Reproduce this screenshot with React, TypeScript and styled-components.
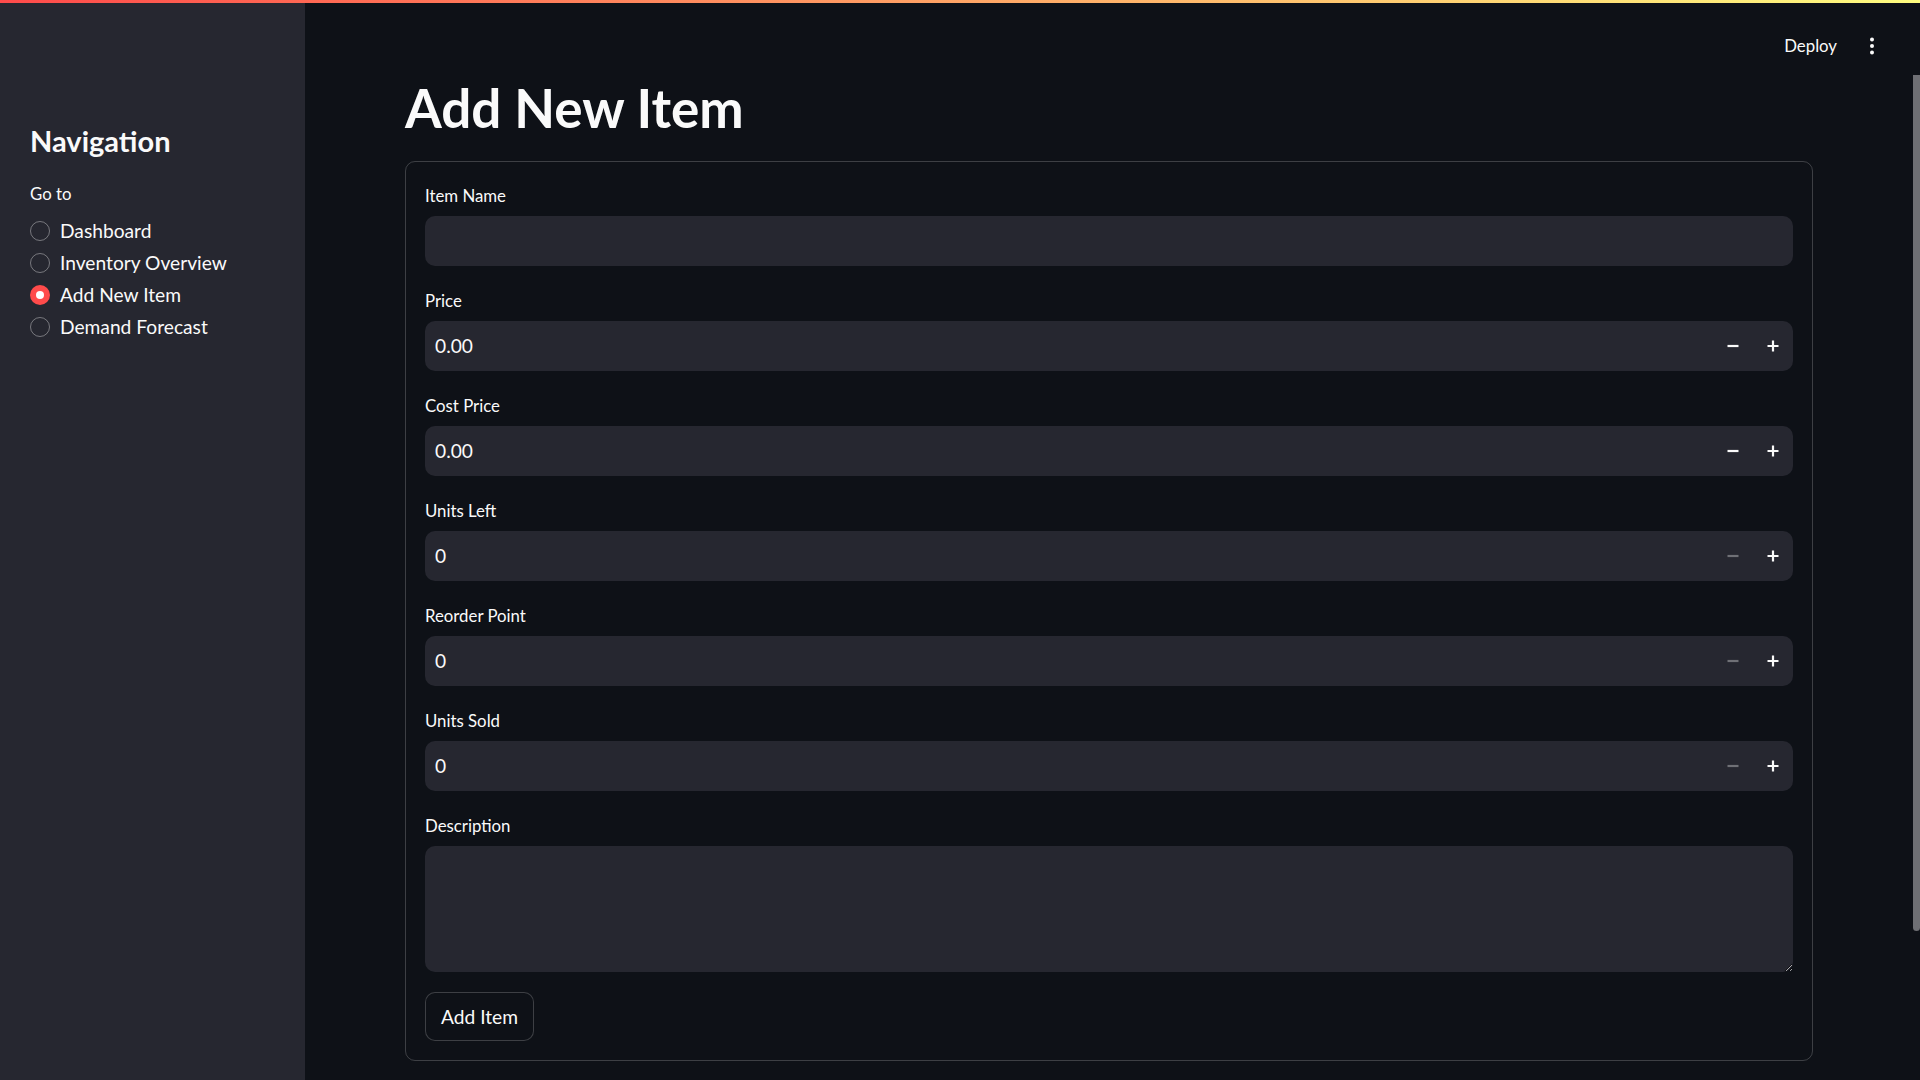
import React from "react";
import styled, { createGlobalStyle } from "styled-components";

const FONT = `Lato, "Open Sans", "Noto Sans", sans-serif`;

const Global = createGlobalStyle`
  html, body {
    margin: 0;
    padding: 0;
    background: #0e1117;
    color: #fafafa;
    font-family: ${FONT};
    overflow: hidden;
  }
  * { box-sizing: border-box; }
`;

const Page = styled.div`
  position: relative;
  display: flex;
  width: 1920px;
  height: 1080px;
  overflow: hidden;
  background: #0e1117;
`;

const Decoration = styled.div`
  position: absolute;
  top: 0;
  left: 0;
  right: 0;
  height: 3px;
  background: linear-gradient(90deg, #ff4b4b, #fffd80);
  z-index: 5;
`;

const Sidebar = styled.aside`
  width: 305px;
  flex: 0 0 305px;
  background: #262730;
  padding: 124px 30px 0 30px;
  display: flex;
  flex-direction: column;
`;

const SidebarTitle = styled.h1`
  margin: 0 0 20px 0;
  font-size: 29px;
  font-weight: 700;
  line-height: 1.2;
  color: #fafafa;
`;

const WidgetLabel = styled.div<{ $gap?: number }>`
  height: 30px;
  line-height: 30px;
  font-size: 16.8px;
  color: #fafafa;
  margin-bottom: ${(p) => p.$gap ?? 5}px;
  white-space: nowrap;
`;

const RadioGroup = styled.div`
  display: flex;
  flex-direction: column;
`;

const RadioRow = styled.label`
  display: flex;
  align-items: center;
  gap: 10px;
  height: 32px;
  font-size: 19.2px;
  color: #fafafa;
  cursor: pointer;
`;

const RadioCircle = styled.span<{ $checked?: boolean }>`
  width: 20px;
  height: 20px;
  border-radius: 50%;
  flex: 0 0 20px;
  display: flex;
  align-items: center;
  justify-content: center;
  background: ${(p) => (p.$checked ? "#ff4b4b" : "transparent")};
  border: ${(p) => (p.$checked ? "none" : "1.5px solid rgba(250,250,250,0.38)")};
  &::after {
    content: "";
    display: ${(p) => (p.$checked ? "block" : "none")};
    width: 8px;
    height: 8px;
    border-radius: 50%;
    background: #ffffff;
  }
`;

const Main = styled.main`
  flex: 1;
  display: flex;
  min-width: 0;
`;

const ScrollArea = styled.div`
  flex: 1;
  display: flex;
  flex-direction: column;
  min-width: 0;
`;

const Header = styled.header`
  height: 76px;
  display: flex;
  justify-content: flex-end;
  align-items: flex-start;
  padding: 32px 31px 0 0;
`;

const Toolbar = styled.div`
  display: flex;
  align-items: center;
  gap: 25px;
  height: 28px;
`;

const DeployButton = styled.span`
  font-size: 16.8px;
  line-height: 28px;
  color: #fafafa;
`;

const MenuDots = styled.svg`
  width: 20px;
  height: 20px;
  display: block;
`;

const Content = styled.div`
  padding: 0 100px;
`;

const Title = styled.h1`
  margin: 0 0 21px 0;
  font-size: 53px;
  font-weight: 700;
  line-height: 1.2;
  color: #fafafa;
`;

const FormBox = styled.form`
  border: 1px solid rgba(250, 250, 250, 0.2);
  border-radius: 10px;
  padding: 19px;
  display: flex;
  flex-direction: column;
  gap: 20px;
`;

const Field = styled.div`
  display: flex;
  flex-direction: column;
`;

const InputShell = styled.div`
  height: 50px;
  background: #262730;
  border-radius: 10px;
  display: flex;
  align-items: center;
`;

const TextInput = styled.input`
  flex: 1;
  min-width: 0;
  height: 100%;
  background: transparent;
  border: none;
  outline: none;
  color: #fafafa;
  font-family: ${FONT};
  font-size: 19.2px;
  padding: 0 10px;
`;

const StepButton = styled.button<{ $disabled?: boolean }>`
  width: 40px;
  height: 100%;
  flex: 0 0 40px;
  background: transparent;
  border: none;
  padding: 0;
  display: flex;
  align-items: center;
  justify-content: center;
  color: ${(p) => (p.$disabled ? "rgba(250,250,250,0.35)" : "#fafafa")};
  cursor: pointer;
`;

const TextArea = styled.textarea`
  height: 126px;
  background: #262730;
  border: none;
  border-radius: 10px;
  outline: none;
  color: #fafafa;
  font-family: ${FONT};
  font-size: 19.2px;
  padding: 10px;
  resize: vertical;
  color-scheme: dark;
  display: block;
  width: 100%;
`;

const SubmitButton = styled.button`
  align-self: flex-start;
  height: 49px;
  padding: 0 15px;
  background: #0e1117;
  border: 1px solid rgba(250, 250, 250, 0.2);
  border-radius: 10px;
  color: #fafafa;
  font-family: ${FONT};
  font-size: 19.2px;
  cursor: pointer;
`;

const ScrollTrack = styled.div`
  width: 7px;
  flex: 0 0 7px;
  padding-top: 75px;
`;

const ScrollThumb = styled.div`
  height: 856px;
  background: #6e6f74;
  border-radius: 0 0 4px 4px;
`;

const MinusIcon = () => (
  <svg width="12" height="12" viewBox="0 0 12 12">
    <path d="M0.5 6h11" stroke="currentColor" strokeWidth="2.2" />
  </svg>
);

const PlusIcon = () => (
  <svg width="12" height="12" viewBox="0 0 12 12">
    <path d="M0.5 6h11M6 0.5v11" stroke="currentColor" strokeWidth="2.2" />
  </svg>
);

type NumField = { label: string; value: string; minDisabled: boolean };

const numberFields: NumField[] = [
  { label: "Price", value: "0.00", minDisabled: false },
  { label: "Cost Price", value: "0.00", minDisabled: false },
  { label: "Units Left", value: "0", minDisabled: true },
  { label: "Reorder Point", value: "0", minDisabled: true },
  { label: "Units Sold", value: "0", minDisabled: true },
];

const navItems = ["Dashboard", "Inventory Overview", "Add New Item", "Demand Forecast"];

export default function App() {
  return (
    <>
      <Global />
      <Page>
        <Decoration />
        <Sidebar>
          <SidebarTitle>Navigation</SidebarTitle>
          <WidgetLabel $gap={6}>Go to</WidgetLabel>
          <RadioGroup>
            {navItems.map((item) => (
              <RadioRow key={item}>
                <RadioCircle $checked={item === "Add New Item"} />
                {item}
              </RadioRow>
            ))}
          </RadioGroup>
        </Sidebar>
        <Main>
          <ScrollArea>
            <Header>
              <Toolbar>
                <DeployButton>Deploy</DeployButton>
                <MenuDots viewBox="0 0 20 20">
                  <circle cx="10" cy="3.5" r="2" fill="#fafafa" />
                  <circle cx="10" cy="10" r="2" fill="#fafafa" />
                  <circle cx="10" cy="16.5" r="2" fill="#fafafa" />
                </MenuDots>
              </Toolbar>
            </Header>
            <Content>
              <Title>Add New Item</Title>
              <FormBox onSubmit={(e) => e.preventDefault()}>
                <Field>
                  <WidgetLabel>Item Name</WidgetLabel>
                  <InputShell>
                    <TextInput type="text" defaultValue="" />
                  </InputShell>
                </Field>
                {numberFields.map((f) => (
                  <Field key={f.label}>
                    <WidgetLabel>{f.label}</WidgetLabel>
                    <InputShell>
                      <TextInput type="text" defaultValue={f.value} />
                      <StepButton type="button" $disabled={f.minDisabled}>
                        <MinusIcon />
                      </StepButton>
                      <StepButton type="button">
                        <PlusIcon />
                      </StepButton>
                    </InputShell>
                  </Field>
                ))}
                <Field>
                  <WidgetLabel>Description</WidgetLabel>
                  <TextArea defaultValue="" />
                </Field>
                <SubmitButton type="submit">Add Item</SubmitButton>
              </FormBox>
            </Content>
          </ScrollArea>
          <ScrollTrack>
            <ScrollThumb />
          </ScrollTrack>
        </Main>
      </Page>
    </>
  );
}
